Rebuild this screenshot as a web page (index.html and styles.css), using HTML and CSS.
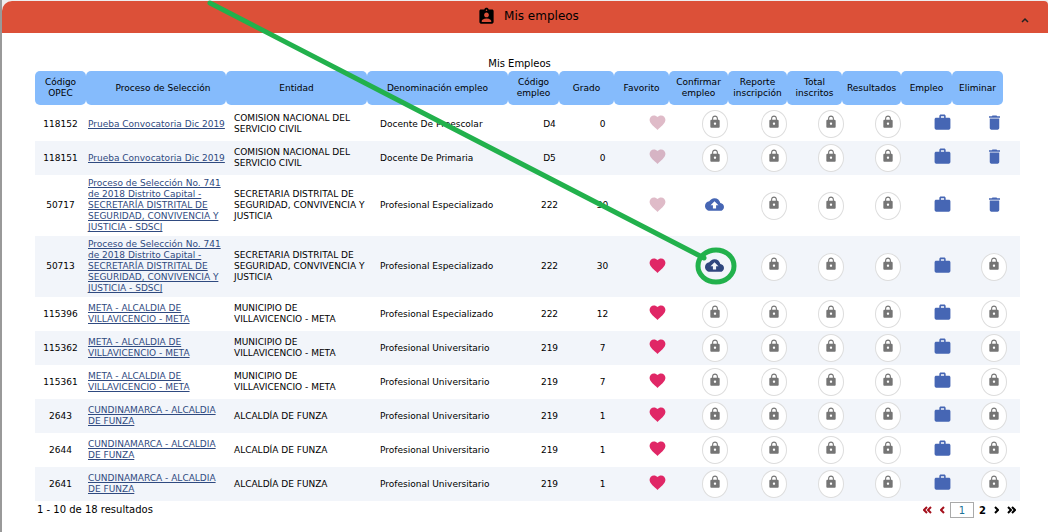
FILE: index.html
```html
<!DOCTYPE html>
<html lang="es">
<head>
<meta charset="utf-8">
<title>Mis empleos</title>
<link rel="stylesheet" href="styles.css">
</head>
<body>
<svg class="sprite" aria-hidden="true">
  <symbol id="lock" viewBox="0 0 24 24"><path d="M18 8h-1V6c0-2.760-2.240-5-5-5S7 3.240 7 6v2H6c-1.100 0-2 .9-2 2v10c0 1.100.9 2 2 2h12c1.100 0 2-.9 2-2V10c0-1.100-.9-2-2-2zm-6 9c-1.100 0-2-.9-2-2s.9-2 2-2 2 .9 2 2-.9 2-2 2zm3.100-9H8.900V6c0-1.710 1.390-3.100 3.100-3.100s3.100 1.390 3.100 3.100v2z"/></symbol>
  <symbol id="heart" viewBox="0 0 24 24"><path d="M12 21.350l-1.450-1.320C5.400 15.360 2 12.280 2 8.500 2 5.420 4.420 3 7.500 3c1.740 0 3.410.81 4.500 2.090C13.090 3.810 14.760 3 16.500 3 19.580 3 22 5.420 22 8.500c0 3.780-3.400 6.860-8.550 11.540L12 21.350z"/></symbol>
  <symbol id="work" viewBox="0 0 24 24"><path d="M20 6h-4V4c0-1.110-.89-2-2-2h-4c-1.110 0-2 .89-2 2v2H4c-1.110 0-1.990.89-1.990 2L2 19c0 1.110.89 2 2 2h16c1.110 0 2-.89 2-2V8c0-1.110-.89-2-2-2zm-6 0h-4V4h4v2z"/></symbol>
  <symbol id="trash" viewBox="0 0 24 24"><path d="M6 19c0 1.100.9 2 2 2h8c1.100 0 2-.9 2-2V7H6v12zM19 4h-3.500l-1-1h-5l-1 1H5v2h14V4z"/></symbol>
  <symbol id="cloud" viewBox="0 0 24 24"><path d="M19.350 10.040C18.670 6.590 15.640 4 12 4 9.110 4 6.600 5.640 5.350 8.040 2.340 8.360 0 10.910 0 14c0 3.310 2.690 6 6 6h13c2.760 0 5-2.240 5-5 0-2.640-2.050-4.780-4.650-4.960zM14 13v4h-4v-4H7l5-5 5 5h-3z"/></symbol>
</svg>

<main class="page">
  <section class="panel">
    <header class="panel-head">
      <svg class="badge" viewBox="0 0 24 24" aria-hidden="true"><path d="M19 3h-4.180C14.400 1.840 13.300 1 12 1c-1.300 0-2.400.84-2.820 2H5c-1.100 0-2 .9-2 2v14c0 1.100.9 2 2 2h14c1.100 0 2-.9 2-2V5c0-1.100-.9-2-2-2zm-7 0c.55 0 1 .45 1 1s-.45 1-1 1-1-.45-1-1 .45-1 1-1zm0 4c1.660 0 3 1.340 3 3s-1.340 3-3 3-3-1.340-3-3 1.340-3 3-3zm6 12H6v-1.400c0-2 4-3.100 6-3.100s6 1.100 6 3.100V19z"/></svg>
      <h1 class="panel-title">Mis empleos</h1>
      <button class="collapse" type="button" aria-label="Contraer"><svg viewBox="0 0 10 10"><path d="M2 7l3-3 3 3"/></svg></button>
    </header>

    <div class="content">
      <table class="jobs">
        <caption>Mis Empleos</caption>
        <thead>
          <tr><th>Código OPEC</th><th class="process">Proceso de Selección</th><th>Entidad</th><th>Denominación empleo</th><th>Código empleo</th><th>Grado</th><th>Favorito</th><th>Confirmar empleo</th><th>Reporte inscripción</th><th>Total inscritos</th><th>Resultados</th><th>Empleo</th><th>Eliminar</th></tr>
        </thead>
        <tbody>
          <tr>
            <td>118152</td><td class="text"><a href="#">Prueba Convocatoria Dic 2019</a></td><td class="text entity">COMISION NACIONAL DEL SERVICIO CIVIL</td><td class="text">Docente De Preescolar</td><td>D4</td><td>0</td>
            <td><button class="icon fav" aria-label="Favorito"><svg><use href="#heart"/></svg></button></td>
            <td><button class="lock" aria-label="Confirmar empleo"><svg><use href="#lock"/></svg></button></td>
            <td><button class="lock" aria-label="Reporte inscripción"><svg><use href="#lock"/></svg></button></td>
            <td><button class="lock" aria-label="Total inscritos"><svg><use href="#lock"/></svg></button></td>
            <td><button class="lock" aria-label="Resultados"><svg><use href="#lock"/></svg></button></td>
            <td><button class="icon" aria-label="Empleo"><svg><use href="#work"/></svg></button></td>
            <td><button class="icon" aria-label="Eliminar"><svg><use href="#trash"/></svg></button></td>
          </tr>
          <tr>
            <td>118151</td><td class="text"><a href="#">Prueba Convocatoria Dic 2019</a></td><td class="text entity">COMISION NACIONAL DEL SERVICIO CIVIL</td><td class="text">Docente De Primaria</td><td>D5</td><td>0</td>
            <td><button class="icon fav" aria-label="Favorito"><svg><use href="#heart"/></svg></button></td>
            <td><button class="lock" aria-label="Confirmar empleo"><svg><use href="#lock"/></svg></button></td>
            <td><button class="lock" aria-label="Reporte inscripción"><svg><use href="#lock"/></svg></button></td>
            <td><button class="lock" aria-label="Total inscritos"><svg><use href="#lock"/></svg></button></td>
            <td><button class="lock" aria-label="Resultados"><svg><use href="#lock"/></svg></button></td>
            <td><button class="icon" aria-label="Empleo"><svg><use href="#work"/></svg></button></td>
            <td><button class="icon" aria-label="Eliminar"><svg><use href="#trash"/></svg></button></td>
          </tr>
          <tr>
            <td>50717</td><td class="text"><a href="#">Proceso de Selección No. 741 de 2018 Distrito Capital - SECRETARÍA DISTRITAL DE SEGURIDAD, CONVIVENCIA Y JUSTICIA - SDSCJ</a></td><td class="text entity">SECRETARIA DISTRITAL DE SEGURIDAD, CONVIVENCIA Y JUSTICIA</td><td class="text">Profesional Especializado</td><td>222</td><td>30</td>
            <td><button class="icon fav" aria-label="Favorito"><svg><use href="#heart"/></svg></button></td>
            <td><button class="icon" aria-label="Confirmar empleo"><svg><use href="#cloud"/></svg></button></td>
            <td><button class="lock" aria-label="Reporte inscripción"><svg><use href="#lock"/></svg></button></td>
            <td><button class="lock" aria-label="Total inscritos"><svg><use href="#lock"/></svg></button></td>
            <td><button class="lock" aria-label="Resultados"><svg><use href="#lock"/></svg></button></td>
            <td><button class="icon" aria-label="Empleo"><svg><use href="#work"/></svg></button></td>
            <td><button class="icon" aria-label="Eliminar"><svg><use href="#trash"/></svg></button></td>
          </tr>
          <tr>
            <td>50713</td><td class="text"><a href="#">Proceso de Selección No. 741 de 2018 Distrito Capital - SECRETARÍA DISTRITAL DE SEGURIDAD, CONVIVENCIA Y JUSTICIA - SDSCJ</a></td><td class="text entity">SECRETARIA DISTRITAL DE SEGURIDAD, CONVIVENCIA Y JUSTICIA</td><td class="text">Profesional Especializado</td><td>222</td><td>30</td>
            <td><button class="icon fav on" aria-label="Favorito"><svg><use href="#heart"/></svg></button></td>
            <td><button class="icon active" aria-label="Confirmar empleo"><svg><use href="#cloud"/></svg></button></td>
            <td><button class="lock" aria-label="Reporte inscripción"><svg><use href="#lock"/></svg></button></td>
            <td><button class="lock" aria-label="Total inscritos"><svg><use href="#lock"/></svg></button></td>
            <td><button class="lock" aria-label="Resultados"><svg><use href="#lock"/></svg></button></td>
            <td><button class="icon" aria-label="Empleo"><svg><use href="#work"/></svg></button></td>
            <td><button class="lock" aria-label="Eliminar"><svg><use href="#lock"/></svg></button></td>
          </tr>
          <tr>
            <td>115396</td><td class="text"><a href="#">META - ALCALDIA DE VILLAVICENCIO - META</a></td><td class="text entity">MUNICIPIO DE VILLAVICENCIO&nbsp;- META</td><td class="text">Profesional Especializado</td><td>222</td><td>12</td>
            <td><button class="icon fav on" aria-label="Favorito"><svg><use href="#heart"/></svg></button></td>
            <td><button class="lock" aria-label="Confirmar empleo"><svg><use href="#lock"/></svg></button></td>
            <td><button class="lock" aria-label="Reporte inscripción"><svg><use href="#lock"/></svg></button></td>
            <td><button class="lock" aria-label="Total inscritos"><svg><use href="#lock"/></svg></button></td>
            <td><button class="lock" aria-label="Resultados"><svg><use href="#lock"/></svg></button></td>
            <td><button class="icon" aria-label="Empleo"><svg><use href="#work"/></svg></button></td>
            <td><button class="lock" aria-label="Eliminar"><svg><use href="#lock"/></svg></button></td>
          </tr>
          <tr>
            <td>115362</td><td class="text"><a href="#">META - ALCALDIA DE VILLAVICENCIO - META</a></td><td class="text entity">MUNICIPIO DE VILLAVICENCIO&nbsp;- META</td><td class="text">Profesional Universitario</td><td>219</td><td>7</td>
            <td><button class="icon fav on" aria-label="Favorito"><svg><use href="#heart"/></svg></button></td>
            <td><button class="lock" aria-label="Confirmar empleo"><svg><use href="#lock"/></svg></button></td>
            <td><button class="lock" aria-label="Reporte inscripción"><svg><use href="#lock"/></svg></button></td>
            <td><button class="lock" aria-label="Total inscritos"><svg><use href="#lock"/></svg></button></td>
            <td><button class="lock" aria-label="Resultados"><svg><use href="#lock"/></svg></button></td>
            <td><button class="icon" aria-label="Empleo"><svg><use href="#work"/></svg></button></td>
            <td><button class="lock" aria-label="Eliminar"><svg><use href="#lock"/></svg></button></td>
          </tr>
          <tr>
            <td>115361</td><td class="text"><a href="#">META - ALCALDIA DE VILLAVICENCIO - META</a></td><td class="text entity">MUNICIPIO DE VILLAVICENCIO&nbsp;- META</td><td class="text">Profesional Universitario</td><td>219</td><td>7</td>
            <td><button class="icon fav on" aria-label="Favorito"><svg><use href="#heart"/></svg></button></td>
            <td><button class="lock" aria-label="Confirmar empleo"><svg><use href="#lock"/></svg></button></td>
            <td><button class="lock" aria-label="Reporte inscripción"><svg><use href="#lock"/></svg></button></td>
            <td><button class="lock" aria-label="Total inscritos"><svg><use href="#lock"/></svg></button></td>
            <td><button class="lock" aria-label="Resultados"><svg><use href="#lock"/></svg></button></td>
            <td><button class="icon" aria-label="Empleo"><svg><use href="#work"/></svg></button></td>
            <td><button class="lock" aria-label="Eliminar"><svg><use href="#lock"/></svg></button></td>
          </tr>
          <tr>
            <td>2643</td><td class="text"><a href="#">CUNDINAMARCA - ALCALDIA DE FUNZA</a></td><td class="text entity">ALCALDÍA DE FUNZA</td><td class="text">Profesional Universitario</td><td>219</td><td>1</td>
            <td><button class="icon fav on" aria-label="Favorito"><svg><use href="#heart"/></svg></button></td>
            <td><button class="lock" aria-label="Confirmar empleo"><svg><use href="#lock"/></svg></button></td>
            <td><button class="lock" aria-label="Reporte inscripción"><svg><use href="#lock"/></svg></button></td>
            <td><button class="lock" aria-label="Total inscritos"><svg><use href="#lock"/></svg></button></td>
            <td><button class="lock" aria-label="Resultados"><svg><use href="#lock"/></svg></button></td>
            <td><button class="icon" aria-label="Empleo"><svg><use href="#work"/></svg></button></td>
            <td><button class="lock" aria-label="Eliminar"><svg><use href="#lock"/></svg></button></td>
          </tr>
          <tr>
            <td>2644</td><td class="text"><a href="#">CUNDINAMARCA - ALCALDIA DE FUNZA</a></td><td class="text entity">ALCALDÍA DE FUNZA</td><td class="text">Profesional Universitario</td><td>219</td><td>1</td>
            <td><button class="icon fav on" aria-label="Favorito"><svg><use href="#heart"/></svg></button></td>
            <td><button class="lock" aria-label="Confirmar empleo"><svg><use href="#lock"/></svg></button></td>
            <td><button class="lock" aria-label="Reporte inscripción"><svg><use href="#lock"/></svg></button></td>
            <td><button class="lock" aria-label="Total inscritos"><svg><use href="#lock"/></svg></button></td>
            <td><button class="lock" aria-label="Resultados"><svg><use href="#lock"/></svg></button></td>
            <td><button class="icon" aria-label="Empleo"><svg><use href="#work"/></svg></button></td>
            <td><button class="lock" aria-label="Eliminar"><svg><use href="#lock"/></svg></button></td>
          </tr>
          <tr>
            <td>2641</td><td class="text"><a href="#">CUNDINAMARCA - ALCALDIA DE FUNZA</a></td><td class="text entity">ALCALDÍA DE FUNZA</td><td class="text">Profesional Universitario</td><td>219</td><td>1</td>
            <td><button class="icon fav on" aria-label="Favorito"><svg><use href="#heart"/></svg></button></td>
            <td><button class="lock" aria-label="Confirmar empleo"><svg><use href="#lock"/></svg></button></td>
            <td><button class="lock" aria-label="Reporte inscripción"><svg><use href="#lock"/></svg></button></td>
            <td><button class="lock" aria-label="Total inscritos"><svg><use href="#lock"/></svg></button></td>
            <td><button class="lock" aria-label="Resultados"><svg><use href="#lock"/></svg></button></td>
            <td><button class="icon" aria-label="Empleo"><svg><use href="#work"/></svg></button></td>
            <td><button class="lock" aria-label="Eliminar"><svg><use href="#lock"/></svg></button></td>
          </tr>
        </tbody>
      </table>

      <footer class="table-foot">
        <p class="count">1 - 10 de 18 resultados</p>
        <nav class="pager" aria-label="Páginas">
          <button class="back" type="button" aria-label="Primera"><svg class="double" viewBox="0 0 9 8"><path d="M4 1L1 4l3 3M8 1L5 4l3 3"/></svg></button>
          <button class="back" type="button" aria-label="Anterior"><svg class="single" viewBox="0 0 5 8"><path d="M4 1L1 4l3 3"/></svg></button>
          <button class="current" type="button">1</button>
          <button class="number" type="button">2</button>
          <button type="button" aria-label="Siguiente"><svg class="single" viewBox="0 0 5 8"><path d="M1 1l3 3-3 3"/></svg></button>
          <button type="button" aria-label="Última"><svg class="double" viewBox="0 0 9 8"><path d="M1 1l3 3-3 3M5 1l3 3-3 3"/></svg></button>
        </nav>
      </footer>
    </div>
  </section>

  <svg class="pointer" viewBox="0 0 1048 532" aria-hidden="true"><path d="M210 3L704 258"/><ellipse cx="716" cy="266" rx="18" ry="16"/></svg>
</main>
</body>
</html>
```
FILE: styles.css
```css
* { box-sizing: border-box; }
body { margin: 0; background: #fff; color: #000; font: 9px/11px "DejaVu Sans", Verdana, sans-serif; }
.sprite { position: absolute; width: 0; height: 0; }
button { margin: 0; padding: 0; border: 0; background: none; color: inherit; font: inherit; }
svg { display: block; fill: currentColor; }

.page { position: relative; min-height: 100vh; padding: 1px 0 0 2px; background: linear-gradient(to right, #999 2px, #eee 2px); display: flex; }
.panel { flex: 1; min-width: 0; background: #fff; border-radius: 10px 4px 0 0; overflow: hidden; }
.panel-head { display: grid; grid-template-columns: 1fr auto auto 1fr; align-items: center; height: 32px; padding: 0 18px 2px 24px; background: #dc5038; }
.badge { width: 19px; height: 19px; grid-column: 2; }
.panel-title { margin: 0 0 0 8px; font-size: 12px; line-height: 16px; font-weight: normal; }
.collapse { justify-self: end; margin-top: 8px; }
.collapse svg { width: 10px; height: 10px; fill: none; stroke: #222; stroke-width: 1.5; }

.content { padding: 24px 28px 12px 33px; }
.jobs { display: block; }
.jobs caption { display: block; padding-right: 16px; font-size: 10px; line-height: 14px; text-align: center; }
.jobs thead, .jobs tbody { display: block; }
.jobs tr { display: grid; }
.jobs thead tr { grid-template-columns: 51fr 140fr 141fr 141fr 51fr 55fr 55fr 59fr 59fr 55fr 59fr 51fr 51fr; padding-right: 17px; margin-bottom: 2px; }
.jobs tbody tr { grid-template-columns: 51fr 142fr 150fr 146fr 51fr 55fr 55fr 59fr 59fr 55fr 59fr 51fr 52fr; min-height: 34px; }
.jobs tbody tr:nth-child(even) { background: #f2f5fa; }
.jobs th, .jobs td { display: flex; align-items: center; justify-content: center; min-width: 0; text-align: center; }
.jobs th { min-height: 34px; padding: 0; border-radius: 5px; background: #85bbfc; font-weight: normal; }
.jobs th.process { padding-left: 14px; }
.jobs td { padding: 3px 0; }
.jobs td.text { justify-content: flex-start; padding-left: 2px; text-align: left; }
.jobs td.entity { padding-left: 6px; padding-right: 6px; }
.jobs a { color: #2f4a80; text-decoration: underline; text-decoration-skip-ink: none; }

.icon { padding-bottom: 3px; color: #4666b4; }
.icon svg { width: 19px; height: 19px; }
.fav { color: #dfbbc8; }
.fav.on { color: #e02766; }
.jobs tbody tr:nth-child(2) .fav { color: #d6b4c4; }
.icon.active { color: #2f467e; }
.lock { display: flex; justify-content: center; align-items: center; width: 26px; height: 28px; padding-bottom: 5px; border: 1px solid #ddd; border-radius: 50%; background: #fff; color: #757575; }
.lock svg { width: 14px; height: 14px; }

.table-foot { display: flex; justify-content: space-between; align-items: center; padding: 0 4px 0 2px; }
.count { margin: 0; font-size: 10px; line-height: 16px; }
.pager { display: flex; align-items: center; gap: 8px; font-size: 10px; padding-top: 1px; }
.pager svg { height: 8px; fill: none; stroke: currentColor; stroke-width: 2; }
.double { width: 9px; }
.single { width: 5px; }
.back { color: #a4101c; }
.pager .current { width: 24px; height: 16px; margin: 0 -3px; border: 1px solid #aaa; color: #1b7296; }
.number { font-weight: bold; }

.pointer { position: absolute; left: 0; top: 0; width: 100%; fill: none; stroke: #22b14c; stroke-width: 5; stroke-linecap: round; pointer-events: none; }
```
